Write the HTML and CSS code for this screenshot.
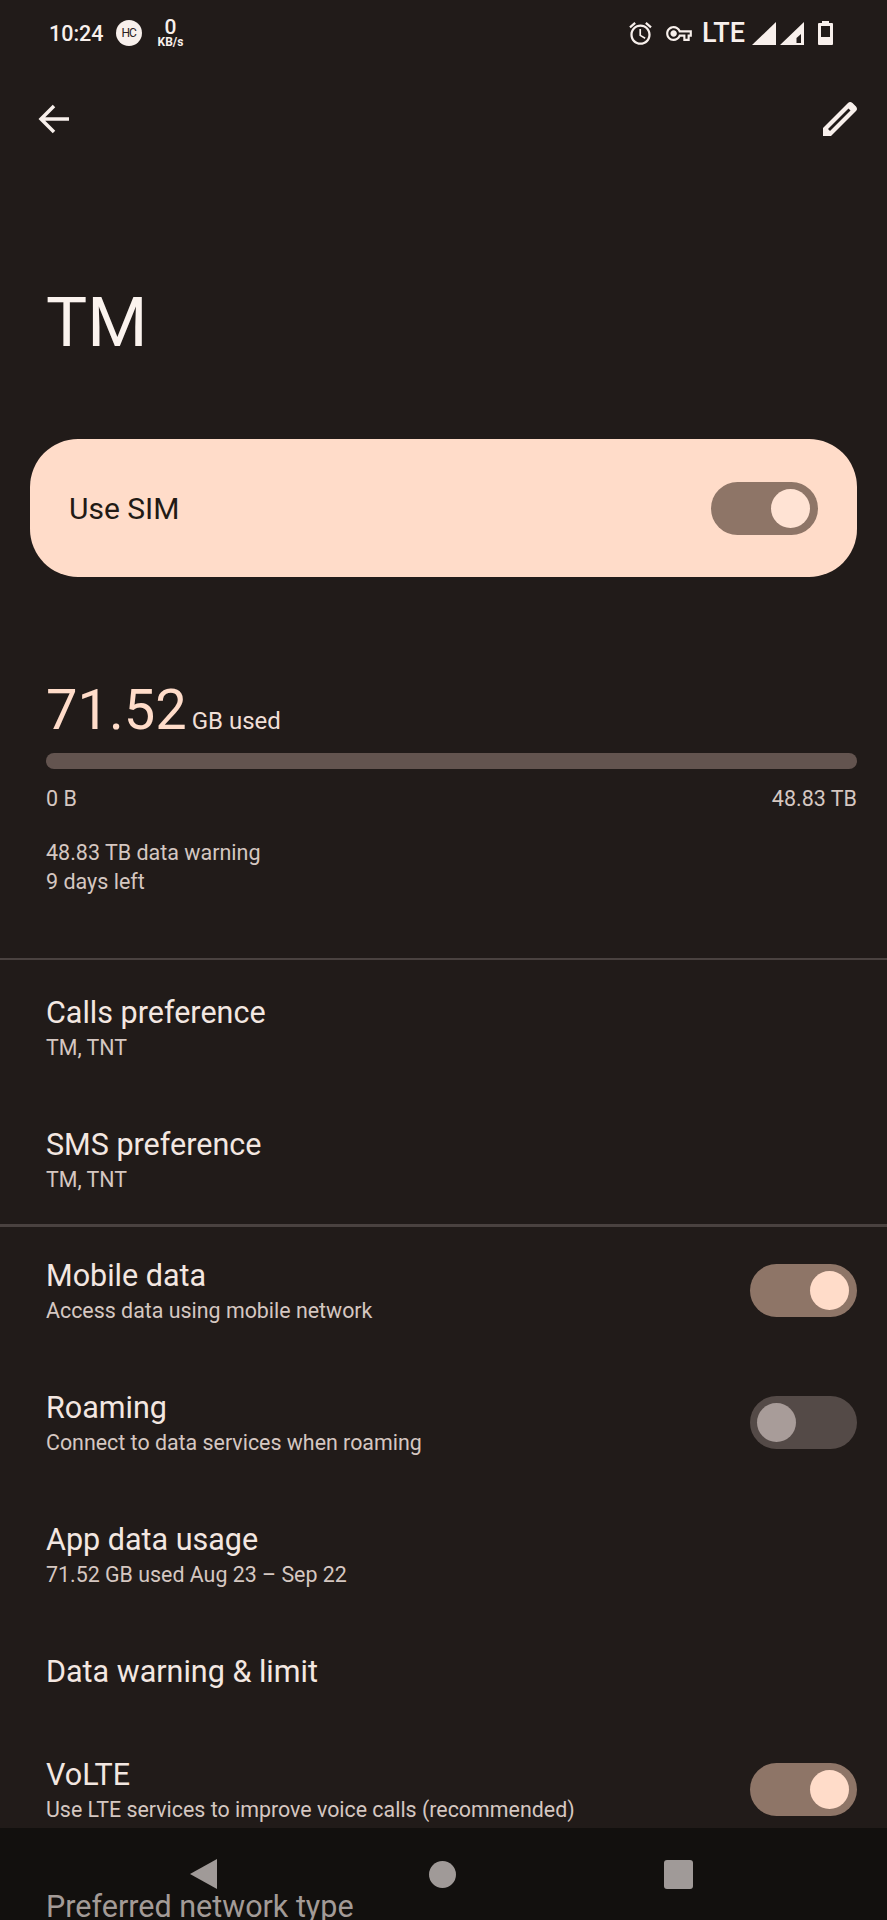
FILE: index.html
```html
<!DOCTYPE html>
<html lang="en">
<head>
    <meta charset="UTF-8">
    <meta name="viewport" content="width=device-width, initial-scale=1.0">
    <title>TM</title>
    <link rel="stylesheet" href="styles.css">
</head>
<body>
  <div class="screen">
    <div class="status-bar">
      <div class="status-left">
        <span class="clock">10:24</span>
        <span class="hc-badge">HC</span>
        <span class="speed"><b>0</b><i>KB/s</i></span>
      </div>
      <div class="status-right">
        <svg class="ic-alarm" viewBox="0 0 24 24"><path d="M22 5.72l-4.6-3.86-1.29 1.53 4.6 3.86L22 5.72zM7.88 3.39L6.6 1.86 2 5.71l1.29 1.53 4.59-3.85zM12.5 8H11v6l4.75 2.85.75-1.23-4-2.37V8zM12 4c-4.97 0-9 4.03-9 9s4.03 9 9 9 9-4.03 9-9-4.03-9-9-9zm0 16c-3.87 0-7-3.13-7-7s3.13-7 7-7 7 3.13 7 7-3.13 7-7 7z"/></svg>
        <svg class="ic-key" viewBox="0 5 24 14"><path d="M22 19h-6v-4h-2.68c-1.14 2.42-3.6 4-6.32 4-3.86 0-7-3.14-7-7s3.14-7 7-7c2.72 0 5.17 1.58 6.32 4H24v6h-2v4zm-4-2h2v-4h2v-2H11.94l-.23-.67C11.01 8.34 9.11 7 7 7c-2.76 0-5 2.24-5 5s2.24 5 5 5c2.11 0 4.01-1.34 4.71-3.33l.23-.67H18v4zM7 15c-1.65 0-3-1.35-3-3s1.35-3 3-3 3 1.35 3 3-1.35 3-3 3z"/></svg>
        <span class="lte">LTE</span>
        <svg class="ic-signal" viewBox="0 0 24 23"><path d="M24 0V23H0Z"/></svg>
        <svg class="ic-signal second" viewBox="0 0 24 23"><path fill-rule="evenodd" d="M24 0V23H0ZM16.500 16V21H21V12Z"/></svg>
        <svg class="ic-battery" viewBox="0 0 15 24"><path fill-rule="evenodd" d="M4 0H11V2H14Q15 2 15 3V23Q15 24 14 24H1Q0 24 0 23V3Q0 2 1 2H4ZM3 5V16H12V5Z"/></svg>
      </div>
    </div>

    <div class="app-bar">
      <svg class="ic-back" viewBox="0 0 32 30"><path d="M16 2 3 15 16 28M3 15H31"/></svg>
      <svg class="ic-edit" viewBox="0 0 36 36"><path fill-rule="evenodd" d="M1 35V27L26 2Q28 0 30.500 2L34 5.500Q36 8 34 10L9 35ZM6 28 8 30 28.500 9.500 26.500 7.500Z"/></svg>
    </div>

    <h1 class="page-title">TM</h1>

    <div class="sim-card">
      <span class="sim-label">Use SIM</span>
      <div class="toggle on"><span class="thumb"></span></div>
    </div>

    <div class="usage">
      <div class="usage-head"><span class="usage-num">71.52</span> <span class="usage-unit">GB used</span></div>
      <div class="usage-bar"></div>
      <div class="usage-range"><span>0 B</span><span>48.83 TB</span></div>
      <p class="usage-note">48.83 TB data warning<br>9 days left</p>
    </div>

    <div class="divider first"></div>

    <div class="pref-group">
      <div class="row">
        <div class="row-text"><div class="row-title">Calls preference</div><div class="row-sub">TM, TNT</div></div>
      </div>
      <div class="row">
        <div class="row-text"><div class="row-title">SMS preference</div><div class="row-sub">TM, TNT</div></div>
      </div>
    </div>

    <div class="divider second"></div>

    <div class="row">
      <div class="row-text"><div class="row-title">Mobile data</div><div class="row-sub">Access data using mobile network</div></div>
      <div class="toggle on"><span class="thumb"></span></div>
    </div>
    <div class="row">
      <div class="row-text"><div class="row-title">Roaming</div><div class="row-sub">Connect to data services when roaming</div></div>
      <div class="toggle off"><span class="thumb"></span></div>
    </div>
    <div class="row">
      <div class="row-text"><div class="row-title">App data usage</div><div class="row-sub">71.52 GB used Aug 23 – Sep 22</div></div>
    </div>
    <div class="row short">
      <div class="row-text"><div class="row-title">Data warning &amp; limit</div></div>
    </div>
    <div class="row">
      <div class="row-text"><div class="row-title">VoLTE</div><div class="row-sub">Use LTE services to improve voice calls (recommended)</div></div>
      <div class="toggle on"><span class="thumb"></span></div>
    </div>

    <div class="nav-bar">
      <svg class="nav-back" viewBox="0 0 28 30"><path d="M27 0V30L0 15Z"/></svg>
      <span class="nav-home"></span>
      <span class="nav-recent"></span>
    </div>

    <div class="row short peek">
      <div class="row-text"><div class="row-title">Preferred network type</div></div>
    </div>
  </div>
</body>
</html>
```

FILE: styles.css
```css
* {
  box-sizing: border-box;
}
body {
  margin: 0;
  background-color: #211b19;
  font-family: Roboto, "Liberation Sans", sans-serif;
}
.screen {
  position: relative;
  width: 887px;
  height: 1920px;
  overflow: hidden;
  background-color: #211b19;
  color: #f8ece6;
}

/* status bar */
.status-bar {
  display: flex;
  justify-content: space-between;
  align-items: center;
  height: 66px;
  padding: 0 54px 0 49px;
  color: #f8f0ec;
}
.status-left,
.status-right {
  display: flex;
  align-items: center;
}
.clock {
  font-size: 21.500px;
  font-weight: 500;
}
.hc-badge {
  display: flex;
  align-items: center;
  justify-content: center;
  width: 26px;
  height: 26px;
  margin-left: 12px;
  border-radius: 50%;
  background-color: #f8f0ec;
  color: #2a2220;
  font-size: 12px;
  letter-spacing: -1px;
}
.speed {
  display: flex;
  flex-direction: column;
  align-items: center;
  margin-left: 16px;
  line-height: 1;
}
.speed b {
  font-size: 21px;
  font-weight: 500;
  line-height: 18px;
}
.speed i {
  font-size: 12px;
  font-style: normal;
  font-weight: 700;
  line-height: 12px;
}
.status-right svg {
  fill: #f8f0ec;
  display: block;
}
.ic-alarm {
  width: 27px;
  height: 27px;
}
.ic-key {
  width: 26px;
  height: 15px;
  margin-left: 12px;
}
.lte {
  margin-left: 10px;
  font-size: 27px;
  font-weight: 500;
  line-height: 30px;
}
.ic-signal {
  width: 24px;
  height: 23px;
  margin-left: 7px;
}
.ic-signal.second {
  margin-left: 4px;
}
.ic-battery {
  width: 15px;
  height: 24px;
  margin-left: 14px;
}

/* top bar */
.app-bar {
  display: flex;
  justify-content: space-between;
  align-items: center;
  height: 38px;
  margin-top: 34px;
  padding: 0 29px 0 38px;
}
.ic-back {
  width: 32px;
  height: 30px;
  fill: none;
  stroke: #f8f0ec;
  stroke-width: 3.5;
}
.ic-edit {
  width: 36px;
  height: 36px;
  fill: #f8f0ec;
}

.page-title {
  margin: 144px 0 0;
  padding: 0 0 0 46px;
  font-size: 69px;
  font-weight: 400;
  line-height: 82px;
  color: #fbf3ee;
}

/* use sim card */
.sim-card {
  display: flex;
  justify-content: space-between;
  align-items: center;
  width: 827px;
  height: 138px;
  margin: 75px 0 0 30px;
  padding: 0 39px;
  border-radius: 48px;
  background-color: #ffdcc9;
  color: #221a15;
}
.sim-label {
  font-size: 30px;
}

/* toggles */
.toggle {
  display: flex;
  align-items: center;
  flex-shrink: 0;
  width: 107px;
  height: 53px;
  padding: 0 8px;
  border-radius: 27px;
}
.toggle .thumb {
  width: 39px;
  height: 39px;
  border-radius: 50%;
}
.toggle.on {
  justify-content: flex-end;
  background-color: #8e7567;
}
.toggle.on .thumb {
  background-color: #ffdcc9;
}
.sim-card .toggle.on .thumb {
  background-color: #ffe3d4;
}
.toggle.off {
  padding-left: 7px;
  background-color: #544a47;
}
.toggle.off .thumb {
  background-color: #a89c99;
}

/* data usage */
.usage {
  margin-top: 102px;
  padding: 0 30px 0 46px;
}
.usage-head {
  display: flex;
  align-items: baseline;
  gap: 5px;
  height: 62px;
}
.usage-num {
  font-size: 56px;
  line-height: 62px;
  color: #ffdcc9;
}
.usage-unit {
  font-size: 24px;
  color: #f0dfd7;
}
.usage-bar {
  height: 16px;
  margin-top: 12px;
  border-radius: 8px;
  background-color: #63544f;
}
.usage-range {
  display: flex;
  justify-content: space-between;
  margin-top: 17px;
  font-size: 21.500px;
  line-height: 26px;
  color: #d5c7c1;
}
.usage-note {
  margin: 26px 0 0;
  font-size: 21.500px;
  line-height: 29px;
  color: #d5c7c1;
}

.divider {
  height: 2px;
  background-color: #4a4240;
}
.divider.first {
  margin-top: 62px;
}
.divider.second {
  height: 3px;
  margin-bottom: -3px;
}
.pref-group {
  padding-top: 1px;
  margin-bottom: -1px;
}

/* list rows */
.row {
  display: flex;
  justify-content: space-between;
  align-items: center;
  height: 132px;
  padding: 0 30px 0 46px;
}
.row.short {
  height: 103px;
}
.row-text {
  padding-top: 3px;
}
.short .row-text {
  padding-top: 0;
}
.row-title {
  font-size: 30.500px;
  line-height: 36px;
  color: #f3e7e1;
}
.row-sub {
  margin-top: 3px;
  font-size: 21.400px;
  line-height: 28px;
  color: #d5c7c1;
}

/* system nav overlay */
.nav-bar {
  position: absolute;
  left: 0;
  right: 0;
  bottom: 0;
  height: 92px;
  background-color: #12100e;
}
.nav-back,
.nav-home,
.nav-recent {
  position: absolute;
}
.nav-back {
  left: 190px;
  top: 31px;
  width: 28px;
  height: 30px;
  fill: #a09a98;
}
.nav-home {
  left: 429px;
  top: 33px;
  width: 27px;
  height: 27px;
  border-radius: 50%;
  background-color: #a09a98;
}
.nav-recent {
  left: 664px;
  top: 32px;
  width: 29px;
  height: 29px;
  border-radius: 3px;
  background-color: #a09a98;
}

/* row that shows through the nav bar at the bottom */
.peek {
  position: relative;
}
.peek .row-title {
  color: #a39b97;
}
```
